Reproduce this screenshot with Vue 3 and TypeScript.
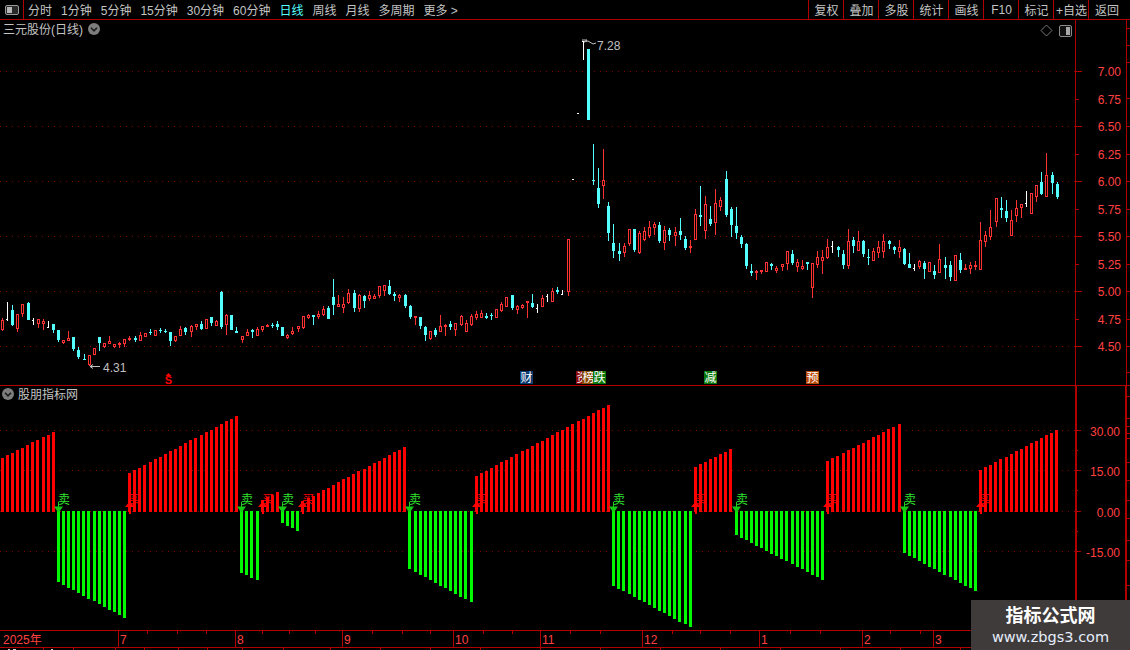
<script setup lang="ts">
type Kind = 'r' | 'c' | 'w'
interface Candle { wick: { x: number; y: number; h: number }; body: { x: number; y: number; w: number; h: number }; color: string; hollow: boolean }

const COLORS: Record<Kind, string> = { r: '#ff3232', c: '#54ffff', w: '#ffffff' }

function parse(x0: number, y0: number, rows: string): Candle[] {
  return rows.trim().split(/\s*,\s*/).map((row) => {
    const p = row.trim().split(/\s+/)
    const [zx, w1, w2, b1, b2] = p.slice(0, 5).map(Number)
    const kind = p[5] as Kind
    const px = Math.floor(x0 + zx / 3)
    const top = Math.round(y0 + b1 / 3)
    const bodyH = Math.max(1, Math.round((b2 - b1) / 3))
    const wy = Math.round(y0 + w1 / 3)
    const wick = { x: px, y: wy, h: Math.max(1, Math.round((w2 - w1) / 3)) }
    if (kind === 'w') return { wick, body: { x: px - 1, y: top, w: 2, h: 1 }, color: COLORS.w, hollow: false }
    const hollow = kind === 'r' && bodyH > 2
    const body = hollow
      ? { x: px - 0.5, y: top + 0.5, w: 2, h: bodyH - 1 }
      : { x: px - 1, y: top, w: 3, h: bodyH }
    return { wick, body, color: COLORS[kind], hollow }
  })
}

const candles: Candle[] = [
  ...parse(0, 230, `7 265 305 270 300 r,22 216 272 268 270 w,37 225 288 240 286 c,52 252 305 252 297 r,67 222 261 222 251 r,
    85 216 270 218 270 c,100 264 285 270 272 w,115 267 294 267 281 r,130 267 300 274 283 r,145 273 294 291 293 w,
    160 282 309 282 300 c,175 300 336 300 330 c,190 330 342 331 339 r,205 304 333 324 333 r,220 321 363 321 357 c,235 351 387 360 381 c`),
  ...parse(0, 290, `253 192 210 207 210 c,268 195 228 195 225 r,283 175 195 175 195 r,298 141 183 141 159 c,313 159 174 159 171 r,
    328 138 162 153 162 r,343 162 174 162 171 r,358 156 174 159 165 r,373 147 171 147 162 r,388 138 153 144 150 r,
    406 138 156 144 150 c,421 126 153 135 153 r,436 129 141 129 141 r,451 117 135 126 129 c,466 120 138 120 138 r,
    481 114 129 120 123 c,496 117 129 123 126 c,511 126 168 126 153 c,526 138 156 138 153 r,541 108 138 117 138 r,
    556 111 135 114 126 c,574 105 141 108 126 r,589 102 120 102 111 r,604 93 120 102 117 c,619 87 117 87 117 r,
    634 81 108 81 99 c,649 90 108 93 108 r,664 3 117 6 111 c,679 72 135 75 105 r,694 75 120 75 120 c,709 111 129 123 129 c,
    727 138 159 138 150 r,742 117 138 126 138 r,757 117 144 120 126 c,772 111 138 117 138 r,787 108 126 108 120 r,
    802 102 111 105 111 r,817 99 114 105 108 c,832 93 120 102 111 c`),
  ...parse(0, 230, `847 291 318 291 318 c,862 312 327 315 324 r,877 291 315 303 312 r,895 288 306 288 297 r`),
  ...parse(300, 230, `10 258 297 258 294 r,25 252 267 255 264 r,40 255 285 255 261 c,55 243 267 252 261 r,70 228 258 237 255 r,
    85 228 267 234 267 c,100 147 255 201 225 c,115 195 231 222 231 r,130 201 249 222 234 r,145 177 222 189 219 r,
    163 180 246 189 234 c,178 192 246 195 237 r,193 195 234 198 213 c,208 183 213 195 207 r,223 192 207 198 207 r,
    238 168 204 168 198 r,253 165 198 165 183 r,268 150 195 168 192 c,283 186 213 192 198 c,298 192 216 195 204 r,
    316 192 234 195 228 c,331 225 267 228 261 c,346 258 285 258 264 r,361 261 297 261 288 c,376 288 333 291 315 c,
    391 303 330 303 327 r,406 294 321 300 315 c,421 255 306 288 306 r,436 282 318 285 291 r,451 273 300 282 291 c,
    466 279 318 279 300 r,484 255 288 258 285 r,499 270 306 279 306 r,514 252 288 258 285 r,529 243 270 252 264 r,
    544 240 264 249 264 r,559 249 267 258 264 c,574 249 270 255 258 c,589 237 264 237 264 r,604 216 246 222 243 r,
    619 201 231 201 231 r,637 195 240 195 234 c,652 225 252 228 240 r,667 222 237 225 234 r,682 213 264 213 219 r,
    697 192 234 219 231 c,712 222 249 234 236 w,727 195 231 204 231 r,742 192 216 198 200 w,757 174 216 183 216 r,
    772 171 192 180 186 c,787 180 195 193 195 w,805 27 198 27 186 r`),
  ...parse(500, 30, `219 448 450 448 450 w,234 250 252 250 252 w,250 32 90 32 34 w,265 57 270 57 270 c,280 342 465 450 453 c,
    295 414 534 474 522 c,310 357 507 450 468 r,325 516 633 528 609 c,340 582 684 639 663 c,358 639 693 663 672 c,
    373 640 681 648 669 r,388 597 648 597 642 r,403 597 666 597 660 c,418 603 672 609 669 r,433 591 633 603 630 r,
    448 573 624 591 618 r,463 576 615 582 594 r,478 576 639 585 633 c,493 588 660 600 639 r,508 594 633 600 615 c,
    526 591 648 606 618 r,541 564 630 603 615 c,556 618 660 627 654 c,571 630 669 648 654 r,586 537 630 552 630 r,
    601 468 588 555 561 c,616 498 627 522 603 r,631 528 588 567 582 c,646 477 615 519 579 r,661 501 543 510 531 r,
    679 423 561 447 555 c,694 531 621 537 585 c,709 531 627 588 609 c`),
  ...parse(740, 140, `4 285 324 291 312 c,19 309 387 312 378 c,34 372 408 393 399 c,49 390 420 393 399 r,64 390 402 390 396 r,
    79 366 396 366 396 r,94 369 390 372 378 c,109 378 399 384 393 r,127 372 393 372 381 r,142 333 390 333 372 r,
    157 330 375 342 369 c,172 357 396 366 381 r,187 360 390 378 387 r,202 366 390 366 372 c,217 369 474 369 444 r,
    232 333 384 351 375 r,247 330 402 351 363 r,262 297 357 321 354 r,277 303 339 318 320 w,295 318 351 321 330 c,
    310 330 387 342 375 c,325 267 387 303 378 r,340 291 339 300 318 c,355 273 333 303 333 r,370 300 351 303 342 c,
    385 327 375 351 354 c,400 324 363 333 363 r,415 303 354 321 339 r,430 282 354 303 336 r,448 300 327 303 312 c,
    463 318 342 321 330 c,478 300 354 321 336 r,493 324 375 327 372 c,508 339 384 372 384 c,523 372 393 384 386 w,
    538 360 387 363 381 r,553 363 417 369 387 c,568 366 396 366 396 r,583 375 417 393 405 c,598 312 399 357 399 r,
    616 351 417 375 384 c,631 363 423 375 411 c,646 345 423 345 423 r,661 339 399 360 390 c,676 372 390 384 390 r,
    691 366 402 375 387 r,706 363 390 375 381 r,721 246 390 300 390 r,736 273 321 285 306 r,751 210 300 261 291 r,
    769 174 261 174 246 r,784 171 234 204 210 c,799 180 246 213 234 c,814 210 288 240 288 r,829 180 246 204 228 r,
    844 192 234 192 204 r,859 153 201 189 191 w,874 159 222 159 222 r,889 135 186 135 171 r,904 96 165 126 162 c,
    919 39 171 105 171 r,937 96 162 105 129 c,952 126 177 132 171 c`),
]

const xAt = (i: number) => Math.floor(2.33 + 5.095 * i)

// each run of the histogram: colour, first/last bar, far end at the first and last bar
const runs: [('up' | 'down'), number, number, number, number][] = [
  ['up', 0, 10, 458, 432], ['down', 11, 24, 582, 618], ['up', 25, 46, 473, 416], ['down', 47, 50, 573, 580],
  ['up', 51, 54, 500, 492], ['down', 55, 58, 523, 531], ['up', 59, 79, 501, 447], ['down', 80, 92, 569, 602],
  ['up', 93, 119, 476, 405], ['down', 120, 135, 586, 627], ['up', 136, 143, 467, 449], ['down', 144, 161, 535, 580],
  ['up', 162, 176, 461, 424], ['down', 177, 191, 553, 591], ['up', 192, 207, 470, 430],
]

const bars = runs.flatMap(([dir, a, b, from, to]) =>
  Array.from({ length: b - a + 1 }, (_, k) => {
    const end = Math.round(from + ((to - from) * k) / Math.max(1, b - a))
    const x = xAt(a + k) - 1
    return dir === 'up'
      ? { x, y: end, h: 512 - end, color: '#ff0000' }
      : { x, y: 511, h: end - 511, color: '#00f800' }
  }),
)

const sells = runs.filter((r) => r[0] === 'down').map((r) => xAt(r[1]))
const buys = runs.filter((r) => r[0] === 'up' && r[1] > 0).map((r) => xAt(r[1]))

const leftTabs = ['分时', '1分钟', '5分钟', '15分钟', '30分钟', '60分钟', '日线', '周线', '月线', '多周期', '更多 >']
const rightTabs = ['复权', '叠加', '多股', '统计', '画线', 'F10', '标记', '+自选', '返回']

const priceGrid = [71, 126, 181, 236, 291, 346]
const priceLabels = [
  ['7.00', 71], ['6.75', 99], ['6.50', 126], ['6.25', 154], ['6.00', 181], ['5.75', 209],
  ['5.50', 236], ['5.25', 264], ['5.00', 291], ['4.75', 319], ['4.50', 346],
] as [string, number][]
const priceMinor = [99, 154, 209, 264, 319]
const indGrid = [431, 471, 512, 552]
const indLabels = [['30.00', 431], ['15.00', 471], ['0.00', 512], ['-15.00', 552]] as [string, number][]
const indMinor = [451, 491, 532]
const rightTicksTop = [28, 45, 62, 98, 126, 154, 181, 209, 236, 264, 291, 319, 346, 372]
const rightTicksLow = [396, 418, 426, 433, 438, 462, 480, 500, 518, 540, 560, 585]

const badges = [
  { x: 520, w: 13, bg: '#0a3a70', t: '财' },
  { x: 576, w: 8, bg: '#8c0a0a', t: '资' },
  { x: 582, w: 12, bg: '#8a4a00', t: '榜' },
  { x: 593, w: 13, bg: '#0a780a', t: '跌' },
  { x: 704, w: 13, bg: '#0a780a', t: '减' },
  { x: 806, w: 13, bg: '#b84a08', t: '预' },
]

const months = [
  ['2025年', 3, 0], ['7', 120, 118], ['8', 237, 235], ['9', 344, 342], ['10', 455, 453], ['11', 542, 540],
  ['12', 644, 642], ['1', 761, 759], ['2', 864, 862], ['3', 935, 933],
] as [string, number, number][]
const xTicks = [147, 177, 206, 262, 289, 315, 372, 402, 430, 483, 512, 570, 600, 672, 700, 730, 790, 820, 890, 920]
const stripMarks = [43, 73, 115, 144, 178, 207, 242, 283, 330, 380, 430, 480, 540, 600, 660, 720, 780, 840, 900, 960]
</script>

<template>
  <div class="terminal">
    <header class="toolbar">
      <div class="tool-icon">
        <svg width="14" height="10" viewBox="0 0 14 10">
          <rect x="0.5" y="0.5" width="13" height="9" rx="1.5" fill="#2a2a2a" stroke="#9a9a9a" />
          <rect x="2" y="2" width="5" height="6" fill="#b8b8b8" />
        </svg>
      </div>
      <nav class="tabs">
        <span v-for="t in leftTabs" :key="t" :class="{ active: t === '日线' }">{{ t }}</span>
      </nav>
      <nav class="cells">
        <span v-for="t in rightTabs" :key="t" class="cell">{{ t }}</span>
      </nav>
    </header>

    <section class="pane price">
      <div class="plot">
        <div class="pane-title">
          <span>三元股份(日线)</span>
          <svg class="chev" width="12" height="12" viewBox="0 0 12 12">
            <circle cx="6" cy="6" r="6" fill="#7d7d7d" />
            <path d="M3 4.8 L6 7.8 L9 4.8" fill="none" stroke="#1c1c1c" stroke-width="1.6" />
          </svg>
        </div>
        <div class="pane-tools">
          <svg width="13" height="13" viewBox="0 0 13 13">
            <path d="M6.5 1 L12 6.5 L6.5 12 L1 6.5 Z" fill="none" stroke="#777" />
          </svg>
          <svg width="13" height="12" viewBox="0 0 13 12">
            <rect x="0.5" y="0.5" width="12" height="11" rx="1.5" fill="#111" stroke="#8a8a8a" />
            <rect x="7" y="2" width="4" height="8" fill="#a8a8a8" />
          </svg>
        </div>
        <svg class="chart" width="1075" height="365" viewBox="0 20 1075 365">
          <line v-for="y in priceGrid" :key="y" x1="0" x2="1075" :y1="y + 0.5" :y2="y + 0.5" class="grid" />
          <g shape-rendering="crispEdges">
            <g v-for="(c, i) in candles" :key="i">
              <rect :x="c.wick.x" :y="c.wick.y" width="1" :height="c.wick.h" :fill="c.color" />
              <rect
                :x="c.body.x"
                :y="c.body.y"
                :width="c.body.w"
                :height="c.body.h"
                :fill="c.hollow ? '#000' : c.color"
                :stroke="c.hollow ? c.color : 'none'"
              />
            </g>
          </g>
          <g class="extreme">
            <path d="M90 366.5 L100 366.5 M90 366.5 L93 364.5 M90 366.5 L93 368.5" />
            <text x="103" y="372">4.31</text>
            <path d="M584 42 L588 41 L593 44 L596 43 M584 42 L587 40 M582 40 L587 40" />
            <text x="597" y="50">7.28</text>
          </g>
          <g>
            <path d="M168.5 373 L171.5 376 L165.5 376 Z" fill="#f00" />
            <text x="168.5" y="384" class="s-mark">S</text>
          </g>
          <g v-for="b in badges" :key="b.x + b.t">
            <rect :x="b.x" y="371" :width="b.w" height="13" :fill="b.bg" shape-rendering="crispEdges" />
            <text :x="b.x + 0.5" y="382" class="badge">{{ b.t }}</text>
          </g>
        </svg>
      </div>
      <aside class="axis">
        <svg width="50" height="365" viewBox="1076 20 50 365">
          <g shape-rendering="crispEdges">
            <line v-for="y in priceGrid" :key="y" x1="1076" x2="1082" :y1="y + 0.5" :y2="y + 0.5" class="tick" />
            <line v-for="y in priceMinor" :key="y" x1="1076" x2="1079" :y1="y + 0.5" :y2="y + 0.5" class="tick" />
          </g>
          <text v-for="l in priceLabels" :key="l[0]" x="1121" :y="l[1] + 5" class="scale">{{ l[0] }}</text>
        </svg>
      </aside>
      <div class="edge">
        <svg width="4" height="365" viewBox="1126 20 4 365">
          <line v-for="y in rightTicksTop" :key="y" x1="1126" x2="1130" :y1="y + 0.5" :y2="y + 0.5" class="tick" shape-rendering="crispEdges" />
        </svg>
      </div>
    </section>

    <section class="pane indicator">
      <div class="plot">
        <div class="pane-title">
          <svg class="chev lead" width="12" height="12" viewBox="0 0 12 12">
            <circle cx="6" cy="6" r="6" fill="#7d7d7d" />
            <path d="M3 4.8 L6 7.8 L9 4.8" fill="none" stroke="#1c1c1c" stroke-width="1.6" />
          </svg>
          <span>股朋指标网</span>
        </div>
        <svg class="chart" width="1075" height="244" viewBox="0 386 1075 244">
          <line v-for="y in indGrid" :key="y" x1="0" x2="1075" :y1="y - 0.5" :y2="y - 0.5" class="grid" />
          <g shape-rendering="crispEdges">
            <rect v-for="(b, i) in bars" :key="i" :x="b.x" :y="b.y" width="3" :height="b.h" :fill="b.color" />
          </g>
          <g v-for="x in sells" :key="'s' + x">
            <rect :x="x" y="502" width="1" height="6" fill="#22d022" shape-rendering="crispEdges" />
            <path :d="`M${x - 4} 506.5 L${x + 5} 506.5 L${x + 0.5} 513 Z`" fill="#16c816" />
            <text :x="x" y="504" class="sell">卖</text>
          </g>
          <g v-for="x in buys" :key="'b' + x">
            <rect :x="x" y="506" width="2" height="8" fill="#f00" shape-rendering="crispEdges" />
            <path :d="`M${x - 4} 507 L${x + 5} 507 L${x + 1} 501 Z`" fill="#f00" />
            <text :x="x" y="504" class="buy">买</text>
          </g>
        </svg>
      </div>
      <aside class="axis thick">
        <svg width="48" height="244" viewBox="1078 386 48 244">
          <g shape-rendering="crispEdges">
            <line v-for="y in indGrid" :key="y" x1="1078" x2="1082" :y1="y - 0.5" :y2="y - 0.5" class="tick" />
            <line v-for="y in indMinor" :key="y" x1="1078" x2="1079" :y1="y - 0.5" :y2="y - 0.5" class="tick" />
          </g>
          <text v-for="l in indLabels" :key="l[0]" x="1121" :y="l[1] + 5" class="scale">{{ l[0] }}</text>
        </svg>
      </aside>
      <div class="edge thick">
        <svg width="3" height="244" viewBox="1127 386 3 244">
          <line v-for="y in rightTicksLow" :key="y" x1="1127" x2="1130" :y1="y + 0.5" :y2="y + 0.5" class="tick" shape-rendering="crispEdges" />
        </svg>
      </div>
    </section>

    <footer class="timeline">
      <svg width="1130" height="16" viewBox="0 631 1130 16">
        <g shape-rendering="crispEdges">
          <line v-for="x in xTicks" :key="x" :x1="x + 0.5" :x2="x + 0.5" y1="631" y2="634" class="tick" />
          <line v-for="m in months.slice(1)" :key="m[0]" :x1="m[2] + 0.5" :x2="m[2] + 0.5" y1="631" y2="647" class="tick" />
        </g>
        <text v-for="m in months" :key="m[0]" :x="m[1]" y="644" class="month">{{ m[0] }}</text>
      </svg>
    </footer>
    <div class="strip">
      <svg width="1130" height="3" viewBox="0 647 1130 3">
        <line v-for="x in stripMarks" :key="x" :x1="x + 0.5" :x2="x + 0.5" y1="647" y2="650" class="tick" shape-rendering="crispEdges" />
        <rect x="8" y="648" width="2" height="2" fill="#ccc" shape-rendering="crispEdges" />
        <rect x="13" y="648" width="3" height="2" fill="#ccc" shape-rendering="crispEdges" />
        <rect x="51" y="648" width="2" height="2" fill="#ccc" shape-rendering="crispEdges" />
      </svg>
    </div>

    <div class="watermark">
      <strong>指标公式网</strong>
      <span>www.zbgs3.com</span>
    </div>
  </div>
</template>

<style>
html, body { background: #000; }
</style>

<style scoped>
.terminal {
  position: relative;
  display: flex;
  flex-direction: column;
  width: 1130px;
  height: 650px;
  overflow: hidden;
  background: #000;
  color: #c4c4c4;
  font-family: "Liberation Sans", "Noto Sans CJK SC", sans-serif;
  font-size: 12px;
}
.toolbar {
  display: flex;
  flex: none;
  align-items: stretch;
  height: 19px;
  border-bottom: 1px solid #b00000;
}
.tool-icon {
  display: flex;
  flex: none;
  align-items: center;
  justify-content: center;
  width: 23px;
  border-right: 1px solid #b00000;
}
.tabs {
  display: flex;
  flex: 1;
  gap: 9px;
  align-items: center;
  padding-left: 4px;
  white-space: nowrap;
}
.tabs .active { color: #54ffff; }
.cells { display: flex; padding-right: 5px; }
.cell {
  display: flex;
  align-items: center;
  justify-content: center;
  width: 35px;
  margin-left: -1px;
  border-left: 1px solid #b00000;
  white-space: nowrap;
}
.cell:last-child { width: 36px; }
.pane { display: flex; flex: none; }
.price { height: 366px; border-bottom: 1px solid #b00000; box-sizing: border-box; }
.indicator { height: 244px; }
.plot { position: relative; flex: none; width: 1075px; }
.chart { display: block; }
.pane-title {
  position: absolute;
  top: 1px;
  left: 3px;
  z-index: 1;
  display: flex;
  align-items: center;
  height: 15px;
}
.indicator .pane-title { top: 0; left: 2px; }
.chev { margin-left: 5px; }
.chev.lead { margin: 0 4px 0 0; }
.pane-tools {
  position: absolute;
  top: 4px;
  right: 3px;
  z-index: 1;
  display: flex;
  gap: 6px;
  align-items: center;
}
.axis { flex: none; width: 50px; border-left: 1px solid #b00000; overflow: hidden; }
.axis.thick { width: 48px; border-left-width: 2px; border-top: 1px solid #b00000; margin-top: -1px; }
.edge { flex: none; width: 4px; border-left: 1px solid #b00000; overflow: hidden; }
.edge.thick { width: 3px; border-left-width: 2px; border-top: 1px solid #b00000; margin-top: -1px; }
.axis svg, .edge svg, .timeline svg, .strip svg { display: block; }
.timeline { flex: none; height: 16px; border-top: 1px solid #b00000; border-bottom: 1px solid #b00000; }
.strip { flex: none; height: 3px; overflow: hidden; }
.grid { stroke: #860000; stroke-width: 1; stroke-dasharray: 1 5; }
.tick { stroke: #b00000; stroke-width: 1; }
.scale { fill: #ff4040; font-size: 12px; text-anchor: end; }
.month { fill: #ff4040; font-size: 12px; }
.extreme path { fill: none; stroke: #c0c0c0; stroke-width: 1; }
.extreme text { fill: #c0c0c0; font-size: 12px; }
.s-mark { fill: #f00; font-size: 11px; font-weight: 700; text-anchor: middle; }
.badge { fill: #fff; font-size: 12px; }
.sell { fill: #2fe02f; font-size: 12px; }
.buy { fill: #ff0000; font-size: 12px; }
.watermark {
  position: absolute;
  right: 0;
  bottom: 0;
  z-index: 2;
  display: flex;
  flex-direction: column;
  align-items: center;
  box-sizing: border-box;
  width: 159px;
  height: 50px;
  padding-top: 5px;
  background: #3f3b3b;
  color: #fff;
}
.watermark strong { font-size: 18px; line-height: 22px; }
.watermark span {
  margin-top: 1px;
  color: #e6eefc;
  font-family: "DejaVu Sans", sans-serif;
  font-size: 14.5px;
  line-height: 18px;
}
</style>
